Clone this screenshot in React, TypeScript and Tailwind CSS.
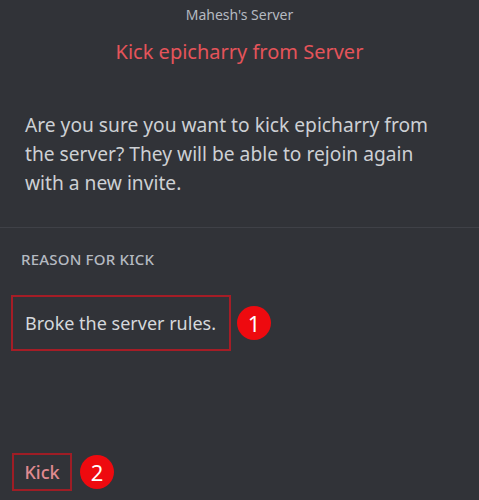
import React from 'react';

const Badge: React.FC<{ n: string }> = ({ n }) => (
  <div className="w-[34px] h-[34px] rounded-full bg-[#ee0a0f] flex items-center justify-center text-white text-[22px] leading-none">
    {n}
  </div>
);

const App: React.FC = () => {
  return (
    <div
      className="w-[479px] h-[500px] bg-[#313338] flex flex-col overflow-hidden"
      style={{ fontFamily: '"Noto Sans", "Open Sans", sans-serif' }}
    >
      <div className="pt-[5px] text-center text-[14px] leading-[20px] text-[#b5bac1]">Mahesh's Server</div>
      <div className="mt-[14px] text-center text-[20px] leading-[26px] text-[#e5545a]">
        Kick epicharry from Server
      </div>

      <p className="mt-[45px] px-[25px] text-[19.2px] leading-[29px] text-[#cdd0d4]">
        Are you sure you want to kick epicharry from the server? They will be able to rejoin again with a new invite.
      </p>

      <div className="mt-[30px] h-px bg-[#3f4147]" />

      <div className="mt-[21px] px-[21px] text-[15px] font-medium leading-[20px] tracking-[0.2px] text-[#b5bac1]">
        REASON FOR KICK
      </div>

      <div className="mt-[26px] ml-[11px] flex items-center gap-[6px]">
        <div className="w-[220px] h-[56px] border-2 border-[#a51d26] flex items-center pl-[12px] text-[18px] text-[#d5d8dc]">
          Broke the server rules.
        </div>
        <Badge n="1" />
      </div>

      <div className="mt-auto mb-[9px] ml-[12px] flex items-center gap-[8px]">
        <div className="w-[60px] h-[38px] border-2 border-[#9e1d25] flex items-center justify-center text-[18px] font-medium text-[#e08a90]">
          Kick
        </div>
        <Badge n="2" />
      </div>
    </div>
  );
};

export default App;
